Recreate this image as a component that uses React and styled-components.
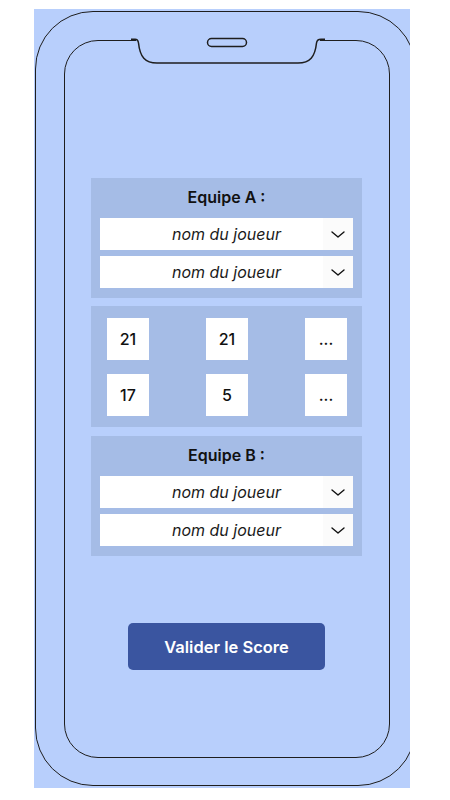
import React from "react";
import styled, { createGlobalStyle } from "styled-components";

const GlobalStyle = createGlobalStyle`
  body {
    margin: 0;
    background: #ffffff;
    font-family: "Inter", "Liberation Sans", sans-serif;
  }
`;

const Stage = styled.div`
  margin: 9px 0 0 34px;
  width: 376px;
  height: 779px;
  background-color: #b8cffc;
  overflow: hidden;
`;

const PhoneBody = styled.div`
  box-sizing: border-box;
  margin: 2px 0 0 1px;
  width: 381px;
  height: 775px;
  border: 1.6px solid #1e1e1e;
  border-radius: 58px;
  padding: 27.5px 0 0 27.5px;
`;

const Screen = styled.div`
  position: relative;
  box-sizing: border-box;
  width: 326px;
  height: 718px;
  border: 1.5px solid #1e1e1e;
  border-radius: 34px;
  display: flex;
  flex-direction: column;
  align-items: center;
  padding-top: 137.5px;
`;

const Notch = styled.svg`
  position: absolute;
  top: -4.5px;
  left: 66px;
  overflow: visible;
`;

const Panel = styled.div`
  box-sizing: border-box;
  width: 271px;
  background-color: #a5bce6;
  padding: ${(p) => p.$pad || "9px 9px 10px"};
  display: flex;
  flex-direction: column;
  gap: ${(p) => p.$gap || "6px"};
  margin-bottom: ${(p) => p.$mb || "0"};
`;

const TeamTitle = styled.h2`
  margin: 0 0 5px;
  font-size: 16px;
  font-weight: 600;
  line-height: 20px;
  text-align: center;
  color: #111;
`;

const Select = styled.div`
  position: relative;
  height: 32px;
  background-color: #ffffff;
  display: flex;
  align-items: center;
  justify-content: center;
`;

const SelectText = styled.span`
  font-family: "Inter", "Liberation Sans", sans-serif;
  font-style: italic;
  font-size: 16px;
  color: #1a1a1a;
`;

const Caret = styled.span`
  position: absolute;
  right: 0;
  top: 0;
  bottom: 0;
  width: 30px;
  background-color: #fbfbfb;
  display: flex;
  align-items: center;
  justify-content: center;
`;

const ScoreRow = styled.div`
  display: flex;
  justify-content: space-between;
`;

const ScoreBox = styled.div`
  width: 42px;
  height: 42px;
  background-color: #ffffff;
  display: flex;
  align-items: center;
  justify-content: center;
  font-size: 16px;
  font-weight: 500;
  color: #111;
`;

const ValidateButton = styled.button`
  margin-top: 67px;
  width: 197px;
  height: 47px;
  border: none;
  border-radius: 5px;
  background-color: #3a55a0;
  color: #ffffff;
  font-family: "Inter", "Liberation Sans", sans-serif;
  font-size: 16.5px;
  font-weight: 600;
  cursor: pointer;
`;

function Chevron() {
  return (
    <svg width="14" height="7" viewBox="0 0 14 7" fill="none">
      <path d="M1 1 L7 6 L13 1" stroke="#111" strokeWidth="1.4" strokeLinecap="round" strokeLinejoin="round" />
    </svg>
  );
}

function PlayerSelect() {
  return (
    <Select>
      <SelectText>nom du joueur</SelectText>
      <Caret>
        <Chevron />
      </Caret>
    </Select>
  );
}

function Team({ name, mb }) {
  return (
    <Panel $mb={mb}>
      <TeamTitle>{name}</TeamTitle>
      <PlayerSelect />
      <PlayerSelect />
    </Panel>
  );
}

const scores = [
  ["21", "21", "..."],
  ["17", "5", "..."],
];

export default function App() {
  return (
    <>
      <GlobalStyle />
      <Stage>
        <PhoneBody>
          <Screen>
            <Notch width="194" height="30" viewBox="0 0 194 30">
              <path
                d="M5 1.5 L189 1.5 L189 7 C 184 21 179 27 167 27 L26 27 C 14 27 9 21 5 7 Z"
                fill="#b8cffc"
              />
              <path
                d="M0 3.2 L4 3.2 Q7 3.2 7.5 7 C 9 21 14 27 26 27 L167 27 C 179 27 184 21 185.5 7 Q186 3.2 190 3.2 L194 3.2"
                fill="none"
                stroke="#1e1e1e"
                strokeWidth="1.5"
              />
              <rect x="76.5" y="2.5" width="39" height="8" rx="4" fill="none" stroke="#1e1e1e" strokeWidth="1.5" />
            </Notch>
            <Team name="Equipe A :" mb="8px" />
            <Panel $pad="12px 15px 11px 16px" $gap="14px" $mb="9px">
              {scores.map((row, i) => (
                <ScoreRow key={i}>
                  {row.map((v, j) => (
                    <ScoreBox key={j}>{v}</ScoreBox>
                  ))}
                </ScoreRow>
              ))}
            </Panel>
            <Team name="Equipe B :" />
            <ValidateButton>Valider le Score</ValidateButton>
          </Screen>
        </PhoneBody>
      </Stage>
    </>
  );
}
